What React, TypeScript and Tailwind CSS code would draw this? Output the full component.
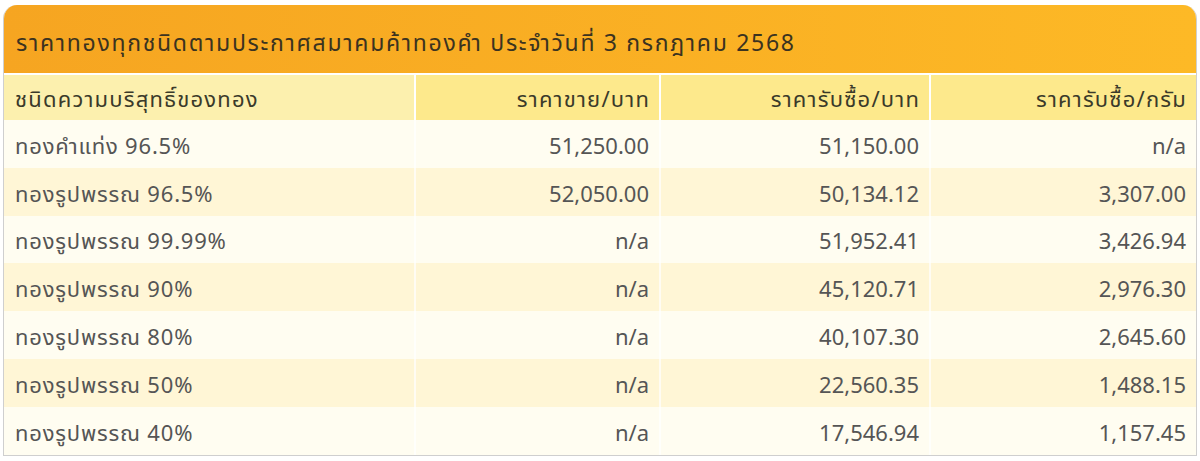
const rows = [
  ['ทองคำแท่ง 96.5%', '51,250.00', '51,150.00', 'n/a'],
  ['ทองรูปพรรณ 96.5%', '52,050.00', '50,134.12', '3,307.00'],
  ['ทองรูปพรรณ 99.99%', 'n/a', '51,952.41', '3,426.94'],
  ['ทองรูปพรรณ 90%', 'n/a', '45,120.71', '2,976.30'],
  ['ทองรูปพรรณ 80%', 'n/a', '40,107.30', '2,645.60'],
  ['ทองรูปพรรณ 50%', 'n/a', '22,560.35', '1,488.15'],
  ['ทองรูปพรรณ 40%', 'n/a', '17,546.94', '1,157.45'],
];

export default function App() {
  return (
    <div className="w-[1200px] h-[461px] bg-white pt-[5px] pl-[3px] pr-[3px] font-['Tahoma','Noto_Sans_Thai','Noto_Sans',sans-serif]">
      <div className="rounded-t-[14px] overflow-hidden border-x border-b border-[#cfcfcf]">
        {/* Title bar */}
        <div className="h-[68px] flex items-center pl-[12px] pt-[11px] bg-gradient-to-r from-[#f6a521] to-[#fdb926] text-[23px] tracking-[1.7px] text-[#3b3320]">
          ราคาทองทุกชนิดตามประกาศสมาคมค้าทองคำ ประจำวันที่ 3 กรกฎาคม 2568
        </div>
        <table className="w-full border-separate border-spacing-0 text-[22px] mt-[2px]">
          <colgroup>
            <col className="w-[412px]" />
            <col className="w-[245px]" />
            <col className="w-[270px]" />
            <col />
          </colgroup>
          <thead>
            <tr className="h-[45px] text-[#3a3a2a] tracking-[1.2px]">
              <th className="font-normal text-left pl-[11px] pt-[6px] bg-[#fcf0ae] border-r-2 border-white">ชนิดความบริสุทธิ์ของทอง</th>
              <th className="font-normal text-right pr-[9px] pt-[6px] bg-[#fde98c] border-r-2 border-white">ราคาขาย/บาท</th>
              <th className="font-normal text-right pr-[9px] pt-[6px] bg-[#fde98c] border-r-2 border-white">ราคารับซื้อ/บาท</th>
              <th className="font-normal text-right pr-[9px] pt-[6px] bg-[#fde98c]">ราคารับซื้อ/กรัม</th>
            </tr>
          </thead>
          <tbody className="text-[#555555]">
            {rows.map((r, i) => (
              <tr key={i} className={`h-[47.8px] ${i % 2 === 0 ? 'bg-[#fffdf1]' : 'bg-[#fff6d6]'}`}>
                <td className="pl-[11px] pt-[7px] tracking-[0.8px] border-r-2 border-white/70">{r[0]}</td>
                <td className="text-right pr-[10px] pt-[7px] border-r-2 border-white/70">{r[1]}</td>
                <td className="text-right pr-[10px] pt-[7px] border-r-2 border-white/70">{r[2]}</td>
                <td className="text-right pr-[10px] pt-[7px]">{r[3]}</td>
              </tr>
            ))}
          </tbody>
        </table>
      </div>
    </div>
  );
}
